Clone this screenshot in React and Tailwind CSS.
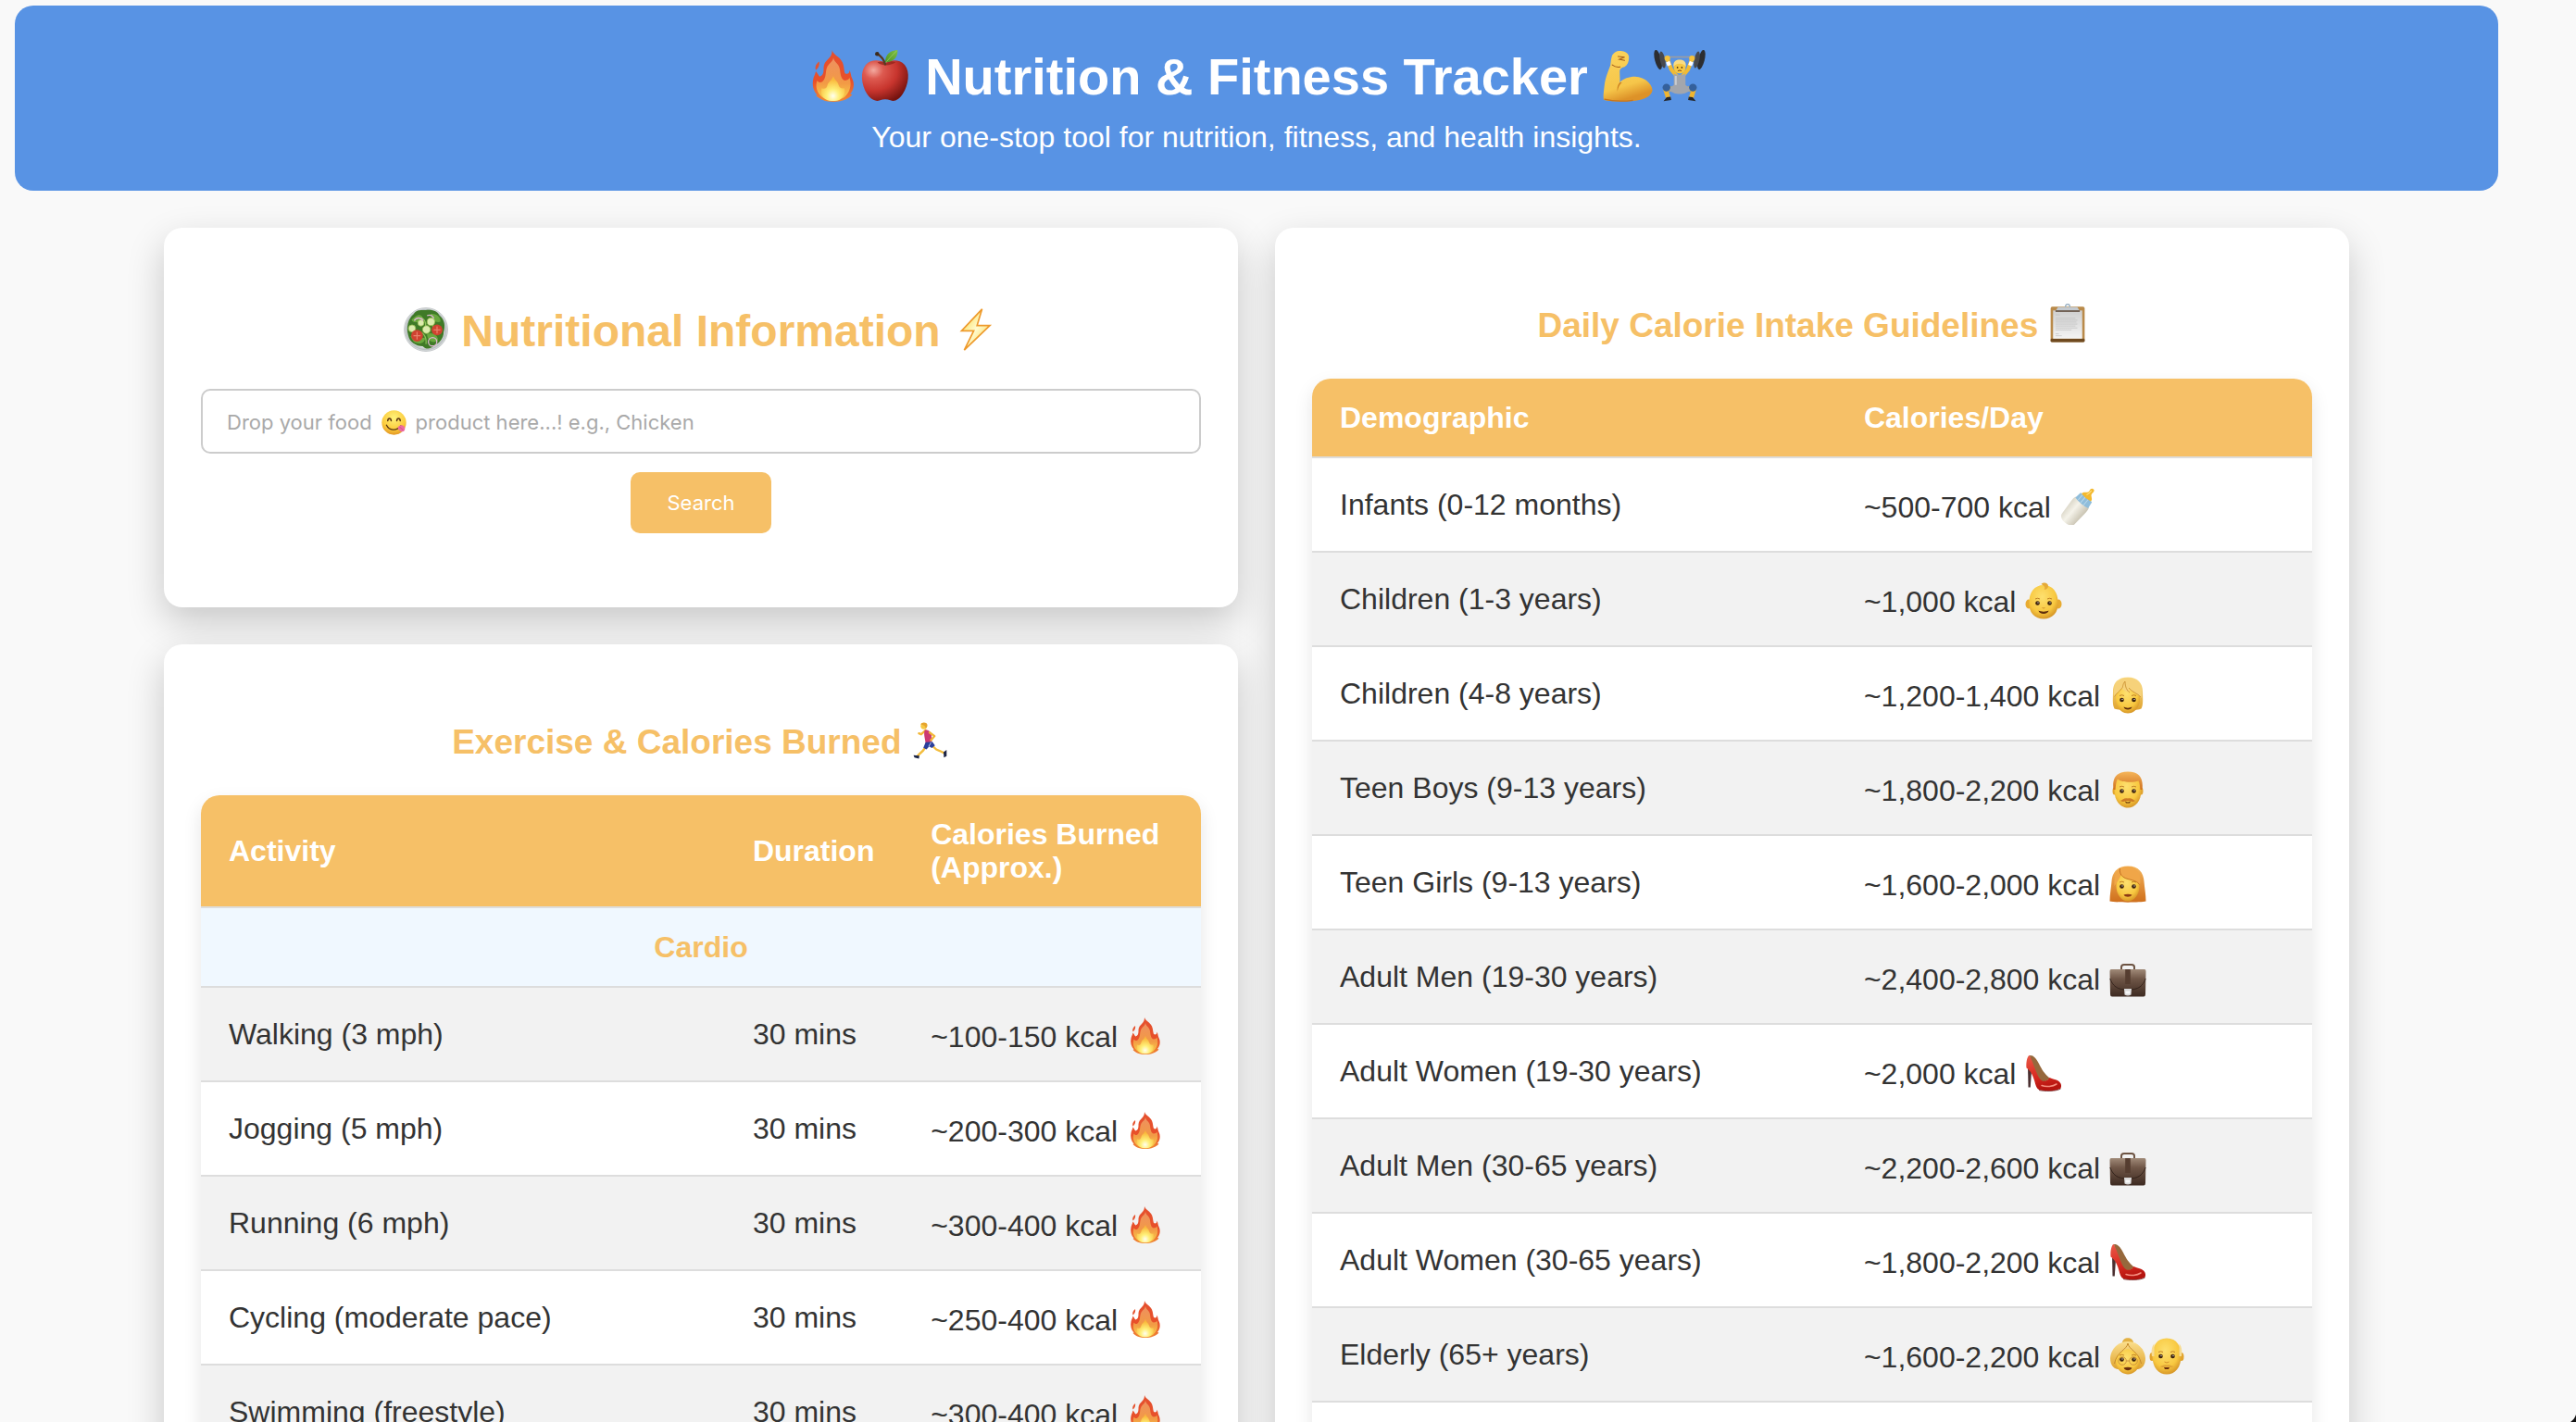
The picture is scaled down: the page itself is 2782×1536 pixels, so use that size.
import { useState } from "react";

/* ---------- emoji drawings, all on a 40 x 40 grid ---------- */

function Svg({ label, className, children }) {
  return (
    <svg viewBox="0 0 40 40" role="img" aria-label={label} className={className}>
      {children}
    </svg>
  );
}

function Fire({ className }) {
  return (
    <Svg label="fire" className={className}>
      <defs>
        <linearGradient id="fireOuter" x1="0" y1="0" x2="0" y2="1">
          <stop offset="0" stopColor="#e4502e" />
          <stop offset="0.6" stopColor="#e8502a" />
          <stop offset="1" stopColor="#f08a35" />
        </linearGradient>
        <linearGradient id="fireMid" x1="0" y1="0" x2="0" y2="1">
          <stop offset="0" stopColor="#ee9060" />
          <stop offset="0.6" stopColor="#f29a45" />
          <stop offset="1" stopColor="#fad24a" />
        </linearGradient>
        <radialGradient id="fireCore" cx="0.5" cy="0.8" r="0.65">
          <stop offset="0" stopColor="#fffef0" />
          <stop offset="0.4" stopColor="#fff07a" />
          <stop offset="1" stopColor="#f9b93c" />
        </radialGradient>
      </defs>
      <path d="M19 0C20 4 25 5 27 9.500C28.500 13 28 15.500 29 18C31 19 32.500 18 32.500 15.500C33.500 17.500 33.500 20 34.500 22C36.500 26 36 30.500 33 34L34.500 34.500C32 38 26 40 20 40C14 40 9 38 6.500 35L7.500 34.500C4.500 31.500 3.500 27 4.500 22.500C5 20 6 19 6.500 16.500C8 18 8.500 20 9.500 20.500C11.500 20 12.500 18 12.500 15C12.500 11 13.500 9.500 16 7C18 5 19 3.500 19 0Z" fill="url(#fireOuter)" />
      <path d="M9 9C9.500 11 9 13.500 6.500 15.500C5.500 13.500 6.500 11 9 9Z" fill="#e5532f" />
      <path d="M20 6C21 10 24.500 10.500 25 15C25.500 19 26 23 29 23.500C31 23.500 32 22.500 32.500 21.500C34.500 27.500 32.500 33 28.500 36.500C24.500 39.500 15 39.500 11 36C7 32.500 6 27.500 7.500 23.500C8.500 25 10 25.500 11.500 24.500C15 21.500 13.500 16 15.500 12.500C17 10 19.500 9 20 6Z" fill="url(#fireMid)" />
      <path d="M20 20C20.500 23 23.500 24 24 27C24.500 29 26 30 28.500 29.500C29.500 33 28 36 25.500 38C23 39.800 16.500 39.800 14 38C11 36 10 33 11 29.500C13.500 30.500 15 29.500 15.500 27C16 24.500 19 23.500 20 20Z" fill="url(#fireCore)" />
    </Svg>
  );
}

function Apple({ className }) {
  return (
    <Svg label="red apple" className={className}>
      <defs>
        <radialGradient id="appleSkin" cx="0.25" cy="0.24" r="0.85">
          <stop offset="0" stopColor="#f3aaa0" />
          <stop offset="0.25" stopColor="#dd5a50" />
          <stop offset="0.6" stopColor="#c8352e" />
          <stop offset="1" stopColor="#75130f" />
        </radialGradient>
        <linearGradient id="appleLeaf" x1="0" y1="1" x2="1" y2="0">
          <stop offset="0" stopColor="#4b9426" />
          <stop offset="1" stopColor="#7fc045" />
        </linearGradient>
      </defs>
      <path d="M20 10C24 7.500 31 7 35 11.500C39.500 17 38 27 33.500 34C30.500 38.800 27 40 24 38.800C21.500 37.800 18.500 37.800 16 38.800C13 40 9 38.500 6 34C1.500 27 0.500 17 5 11.500C9 7 16 7.500 20 10Z" fill="url(#appleSkin)" />
      <path d="M14 9.500C17 12.500 24 12.500 28 9.500C24 8 22 9 20.500 10.500C18.500 8.500 17 8.500 14 9.500Z" fill="#8d1f18" opacity="0.7" />
      <path d="M20 11C19 7.500 16.500 4.500 14 3" stroke="#5a3a22" strokeWidth="1.700" strokeLinecap="round" fill="none" />
      <circle cx="13.800" cy="3" r="1.600" fill="#3d2a1a" />
      <path d="M20 9.500C20 4 23 0.500 29.500 0C30 5.500 26.500 9.500 20 9.500Z" fill="url(#appleLeaf)" />
      <path d="M21 9C23.500 6 26 3.500 29 0.500" stroke="#a8d66e" strokeWidth="0.500" fill="none" />
    </Svg>
  );
}

function Biceps({ className }) {
  return (
    <Svg label="flexed biceps" className={className}>
      <defs>
        <linearGradient id="bicepsSkin" x1="0" y1="0" x2="0.3" y2="1">
          <stop offset="0" stopColor="#fbd45c" />
          <stop offset="0.75" stopColor="#f6c64a" />
          <stop offset="1" stopColor="#dd9228" />
        </linearGradient>
      </defs>
      <path d="M8 4C9.500 1.500 12 0.300 14.500 0.800C17.500 1 20.500 2.500 20.800 5C21 8.500 20 11.500 17.500 13C15.500 13.500 14.500 14 13.800 15.500C13.500 19 14.200 22 13.800 25C16.500 22 21 20.500 25.500 20.500C32.500 20.800 38.500 25.500 39 31C38 36.500 31 39 22 39.500C14 40 6 39.500 1.500 38.500C0.800 37 1.300 33 2 27C3 20 5 16.500 6.500 12C7 9 7 6.500 8 4Z" fill="url(#bicepsSkin)" />
      <path d="M13.800 25C12 27 11.500 29.500 12 32C12.500 29 13.500 27 15.500 25Z" fill="#cf8222" />
      <path d="M1.800 38C8 39.500 16 39.800 24 38.800" stroke="#c9741b" strokeWidth="0.900" fill="none" />
      <path d="M12.500 5L17.500 5.500L13.500 7.200L17.500 8M8 11.500C10 13 12 13.500 14 13" stroke="#a35b1b" strokeWidth="0.800" fill="none" strokeLinecap="round" />
    </Svg>
  );
}

function Lifter({ className }) {
  return (
    <Svg label="person lifting weights" className={className}>
      <rect x="6" y="4.800" width="28" height="1.200" fill="#9a9da3" />
      <g fill="#2c2d30">
        <ellipse cx="3.300" cy="7.500" rx="2.500" ry="7.800" transform="rotate(-14 3.300 7.500)" />
        <ellipse cx="36.700" cy="7.500" rx="2.500" ry="7.800" transform="rotate(14 36.700 7.500)" />
      </g>
      <g fill="#47494e">
        <ellipse cx="6.800" cy="7.500" rx="2" ry="6.500" transform="rotate(-12 6.800 7.500)" />
        <ellipse cx="33.200" cy="7.500" rx="2" ry="6.500" transform="rotate(12 33.200 7.500)" />
      </g>
      <path d="M10.500 7L13.500 15L18 20.500M29.500 7L26.500 15L22 20.500" stroke="#f2bb33" strokeWidth="3" fill="none" />
      <path d="M10.800 9L12 12M29.200 9L28 12" stroke="#fff" strokeWidth="3" />
      <circle cx="10.500" cy="6.500" r="2.200" fill="#f4c13c" />
      <circle cx="29.500" cy="6.500" r="2.200" fill="#f4c13c" />
      <path d="M14 30L9 30L11.500 38M26 30L31 30L28.500 38" stroke="#f0b52f" strokeWidth="3.600" fill="none" strokeLinejoin="round" />
      <path d="M15.500 18C17 19.500 23 19.500 24.500 18L24.500 27L28.500 30C27 33 23 34 20 34C17 34 13 33 11.500 30L15.500 27Z" fill="#a3a6ac" />
      <path d="M17 20L17 27" stroke="#c9cbcf" strokeWidth="1.500" />
      <circle cx="9.800" cy="29" r="3" fill="#34609c" />
      <circle cx="30.200" cy="29" r="3" fill="#34609c" />
      <circle cx="20" cy="13.500" r="4.600" fill="#f7c843" />
      <path d="M15.200 13C14.800 8.500 17.500 7.500 20 7.500C22.500 7.500 25.200 8.500 24.800 13C23.500 11 22 10.500 20 10.500C18 10.500 16.500 11 15.200 13Z" fill="#fadc82" />
      <circle cx="18.300" cy="13.500" r="0.600" fill="#4a2b11" />
      <circle cx="21.700" cy="13.500" r="0.600" fill="#4a2b11" />
      <path d="M18.500 16.300C19.500 15.500 20.500 15.500 21.500 16.300" stroke="#7b3d14" strokeWidth="0.700" fill="none" />
      <path d="M7.500 39.500L13.500 38.500L13 36L10 36.500ZM32.500 39.500L26.500 38.500L27 36L30 36.500Z" fill="#26272b" />
    </Svg>
  );
}

function Salad({ className }) {
  return (
    <Svg label="green salad" className={className}>
      <defs>
        <radialGradient id="saladBowl" cx="0.5" cy="0.5" r="0.5">
          <stop offset="0.8" stopColor="#dfe3e4" />
          <stop offset="0.92" stopColor="#b9bfc1" />
          <stop offset="1" stopColor="#eceeee" />
        </radialGradient>
      </defs>
      <circle cx="20" cy="20" r="19.600" fill="url(#saladBowl)" stroke="#a9afb1" strokeWidth="0.500" />
      <path d="M9 6C12 1 18 3 20 2.500C25 2 30 3 32 7C37 11 37.500 17 36 22C36 28 32 32 28 34C24 38 20 38 17 35C11 35 5 31 4 25C2 18 4 10 9 6Z" fill="#3f7a27" />
      <path d="M11 8C15 5 18 8 16 12C12 14 8 14 7 11ZM24 6C29 5 34 9 33 13C29 14 25 12 24 6ZM21 24C26 22 31 25 31 30C26 33 21 30 21 24ZM6 26C10 24 14 29 19 27C20 32 14 34 9 31Z" fill="#69a83e" />
      <path d="M16 9C20 12 21 16 18 20M28 12C25 16 26 20 30 23M13 22C17 22 21 26 20 33" stroke="#8bc356" strokeWidth="1" fill="none" />
      <g stroke="#9bbf56" strokeWidth="0.700" fill="#dcecae">
        <circle cx="7.500" cy="19" r="3.200" />
        <circle cx="24.500" cy="13" r="3.400" />
        <circle cx="20.500" cy="20" r="3.500" />
        <circle cx="15.500" cy="14" r="2.800" />
      </g>
      <g fill="#cf4330">
        <circle cx="12" cy="25.500" r="5.300" />
        <circle cx="30" cy="20.300" r="4.900" />
      </g>
      <path d="M12 22V29M8.800 25.500H15.200M30 17V23.500M27 20.300H33" stroke="#e9806a" strokeWidth="1" />
      <g fill="none" stroke="#dcb4cf" strokeWidth="1.100">
        <circle cx="26" cy="31" r="3.800" />
        <path d="M9.500 12C11 9 15.500 8.500 17.500 12M21 7.500C24 6 26.500 8 27 10" />
      </g>
    </Svg>
  );
}

function Bolt({ className }) {
  return (
    <Svg label="high voltage" className={className}>
      <defs>
        <linearGradient id="boltFill" x1="0" y1="0" x2="1" y2="1">
          <stop offset="0" stopColor="#fbd52f" />
          <stop offset="0.5" stopColor="#fffbd0" />
          <stop offset="1" stopColor="#fbcf2d" />
        </linearGradient>
      </defs>
      <path d="M25.500 1.500L7 21.200L18 21.200L9.500 38.500L32.500 16.300L21 16.300Z" fill="url(#boltFill)" stroke="#ee9a2c" strokeWidth="1.400" strokeLinejoin="miter" />
    </Svg>
  );
}

function Yum({ className }) {
  return (
    <Svg label="face savoring food" className={className}>
      <defs>
        <radialGradient id="yumFace" cx="0.5" cy="0.3" r="0.75">
          <stop offset="0" stopColor="#fff27a" />
          <stop offset="0.65" stopColor="#fbcb3c" />
          <stop offset="1" stopColor="#dd8a1f" />
        </radialGradient>
      </defs>
      <circle cx="20" cy="20" r="19.500" fill="url(#yumFace)" />
      <path d="M10 17C10.500 12 15 12 15.500 17M24.500 17C25 12 29.500 12 30 17" stroke="#5b3512" strokeWidth="2.200" fill="none" strokeLinecap="round" />
      <path d="M8 24C12 32 23 35 31 25" stroke="#5b3512" strokeWidth="2" fill="none" strokeLinecap="round" />
      <path d="M26 28C28 24 33 23 36 26C39 30 37 35 33 34.500C30 34 27 32 26 28Z" fill="#ee6aa0" />
      <path d="M29 27.500C31 28 33 30 34 32" stroke="#c13f7b" strokeWidth="1" fill="none" />
    </Svg>
  );
}

function Runner({ className }) {
  return (
    <Svg label="person running" className={className}>
      <g transform="translate(2 2) scale(0.92)">
        <path d="M14 9L9 13.500L6.500 12.500" stroke="#f1b636" strokeWidth="2.400" fill="none" strokeLinecap="round" />
        <path d="M16 25L11 32L5 37.500" stroke="#f3bd3d" strokeWidth="2.600" fill="none" />
        <path d="M20 25L26 30.500L35 34.500" stroke="#f3bd3d" strokeWidth="2.400" fill="none" />
        <path d="M13 9C16 8 19.500 10 20.500 13L21 22L14 23.500C13.500 18 11.500 14 13 9Z" fill="#cc3a72" />
        <path d="M14 22.500L21.500 22L24.500 26L21 29L18 27L15 30.500L11.500 28.500Z" fill="#2b3f9b" />
        <path d="M17.500 27L20 23" stroke="#dbe3f7" strokeWidth="0.900" />
        <path d="M18.500 11.500L24 15.500L20 20" stroke="#f1b636" strokeWidth="2.400" fill="none" strokeLinecap="round" strokeLinejoin="round" />
        <circle cx="12" cy="4.300" r="3.500" fill="#f7c843" />
        <path d="M8.500 2.500C9.500 0 15 -0.500 16 3C16 5.500 15 6.500 14 6.500C14 4.500 12 3 8.500 2.500Z" fill="#e6a52f" />
        <path d="M0.500 37L7 37.500L6.500 40.800L1.500 39.500Z" fill="#1d2545" />
        <path d="M34 33.500L37.500 31L37.500 38L34.500 39.500Z" fill="#1d2545" />
      </g>
    </Svg>
  );
}

function Clipboard({ className }) {
  return (
    <Svg label="clipboard" className={className}>
      <defs>
        <linearGradient id="clipPaper" x1="0" y1="0" x2="0" y2="1">
          <stop offset="0" stopColor="#cfcfcf" />
          <stop offset="1" stopColor="#f4f4f4" />
        </linearGradient>
      </defs>
      <rect x="2.500" y="3" width="35" height="36.500" rx="1.800" fill="#b98a4a" />
      <rect x="2.500" y="36" width="35" height="3.500" rx="1.200" fill="#6f4a20" />
      <rect x="5" y="7" width="30" height="29" fill="url(#clipPaper)" />
      <path d="M7.500 11.500H12M7.500 15H28M7.500 17H30M7.500 19H29M7.500 21H30M7.500 23H28M7.500 25H30M7.500 27H24M7.500 31H11M7.500 33H14" stroke="#bcbcbc" strokeWidth="0.600" />
      <circle cx="20" cy="2.800" r="2.200" fill="none" stroke="#8fa9bd" strokeWidth="1.200" />
      <path d="M10 3.500H30L32.500 7.500H7.500Z" fill="#c3c9cf" />
      <path d="M7.500 6.800H32.500V8.500H7.500Z" fill="#6b5a4d" />
    </Svg>
  );
}

function Bottle({ className }) {
  return (
    <Svg label="baby bottle" className={className}>
      <defs>
        <linearGradient id="bottleMilk" x1="0" y1="0" x2="1" y2="0">
          <stop offset="0" stopColor="#dcd8ca" />
          <stop offset="0.4" stopColor="#f5f3ea" />
          <stop offset="1" stopColor="#c9c3b2" />
        </linearGradient>
      </defs>
      <g transform="rotate(40 20 20)">
        <path d="M11 14C9.500 16 10 19 10 21L11 37C11 41 15 43 20 43C25 43 29 41 29 37L30 21C30 19 30.500 16 29 14Z" fill="url(#bottleMilk)" />
        <path d="M12 7.500Q20 5.500 28 7.500L29 15Q20 17 11 15Z" fill="#8fbddb" />
        <path d="M15 8V15M19 8V15.500M23 8V15.500" stroke="#b9d8ea" strokeWidth="1" />
        <path d="M13.500 7.500C13.500 3 18 4 18 0C17.500 -2 17.500 -4.500 20 -4.500C22.500 -4.500 22.500 -2 22 0C22 4 26.500 3 26.500 7.500Q20 9 13.500 7.500Z" fill="#f3b92f" />
        <path d="M18.500 5C19.500 3 19.500 1 19.500 -2" stroke="#fce08a" strokeWidth="1.200" fill="none" />
      </g>
    </Svg>
  );
}

function SkinGradient() {
  return (
    <defs>
      <radialGradient id="skin" cx="0.45" cy="0.35" r="0.7">
        <stop offset="0" stopColor="#fde06f" />
        <stop offset="0.65" stopColor="#f8c840" />
        <stop offset="1" stopColor="#d08c22" />
      </radialGradient>
      <linearGradient id="blond" x1="0" y1="0" x2="0" y2="1">
        <stop offset="0" stopColor="#fbdf8d" />
        <stop offset="1" stopColor="#dfa32f" />
      </linearGradient>
      <linearGradient id="ginger" x1="0" y1="0" x2="0" y2="1">
        <stop offset="0" stopColor="#f5b55a" />
        <stop offset="1" stopColor="#cf6f1c" />
      </linearGradient>
    </defs>
  );
}

function Eyes({ y }) {
  return (
    <g>
      <circle cx="13.500" cy={y} r="2.300" fill="#3c220d" />
      <circle cx="26.500" cy={y} r="2.300" fill="#3c220d" />
      <circle cx="14" cy={y - 0.6} r="0.600" fill="#fff" />
      <circle cx="27" cy={y - 0.6} r="0.600" fill="#fff" />
      <path d={`M11 ${y - 4.5}Q13.500 ${y - 6} 16 ${y - 4.5}M24 ${y - 4.5}Q26.500 ${y - 6} 29 ${y - 4.5}`} stroke="#b9761f" strokeWidth="0.900" fill="none" />
    </g>
  );
}

function Baby({ className }) {
  return (
    <Svg label="baby" className={className}>
      <SkinGradient />
      <ellipse cx="4" cy="23.500" rx="3.500" ry="5" fill="#e8ab31" />
      <ellipse cx="36" cy="23.500" rx="3.500" ry="5" fill="#e8ab31" />
      <path d="M20 3C30 3 35.500 11 35.500 21C36.500 33 29 39.500 20 39.500C11 39.500 3.500 33 4.500 21C4.500 11 10 3 20 3Z" fill="url(#skin)" />
      <path d="M17.500 2C20 -0.500 25 0.500 25 4C25 7 22 8.500 20.500 7.500C22 6.500 21.500 4 17.500 2Z" fill="#e5aa37" />
      <Eyes y={22.500} />
      <path d="M14.500 30.500C17 32 23 32 25.500 30.500C25 35 15 35 14.500 30.500Z" fill="#5d2c0c" />
      <path d="M18.500 27.500Q20 28.500 21.500 27.500" stroke="#c98122" strokeWidth="0.800" fill="none" />
    </Svg>
  );
}

function Child({ className }) {
  return (
    <Svg label="child" className={className}>
      <SkinGradient />
      <path d="M20 0.500C31 0.500 36 7 36 16C36 22 37 30 34.500 34.500C31 36.500 9 36.500 5.500 34.500C3 30 4 22 4 16C4 7 9 0.500 20 0.500Z" fill="url(#blond)" />
      <path d="M20 7C29 7 33 14 33 24C33 33 27 39.500 20 39.500C13 39.500 7 33 7 24C7 14 11 7 20 7Z" fill="url(#skin)" />
      <path d="M5 22C7 18 10 17 13.500 12C15 15 19 16 22 17C22 15 21 13.500 21 12C24 17 31 18 34.500 23C37 12 33 1 20 1C8 1 3 11 5 22Z" fill="#f6d27a" />
      <path d="M17 5C14 8 15 12 13.500 12.500C11 16 7.500 18 5.500 21.500M17 5C17 11 19 15 22 17M21 12C24 16.500 31 18 34 22" stroke="#c68a2c" strokeWidth="0.800" fill="none" />
      <Eyes y={25} />
      <path d="M15.500 32.500C18 34 22 34 24.500 32.500C24 36.500 16 36.500 15.500 32.500Z" fill="#5d2c0c" />
    </Svg>
  );
}

function Man({ className }) {
  return (
    <Svg label="man" className={className}>
      <SkinGradient />
      <ellipse cx="5.500" cy="21.500" rx="2" ry="4" fill="#e2a32e" />
      <ellipse cx="34.500" cy="21.500" rx="2" ry="4" fill="#e2a32e" />
      <path d="M20 4C30 4 34.500 10 34.500 21C34.500 32 28 39.500 20 39.500C12 39.500 5.500 32 5.500 21C5.500 10 10 4 20 4Z" fill="url(#skin)" />
      <path d="M4.500 20C3 8 7 0.500 20 0.500C33 0.500 37 8 35.500 20L33.500 20C33 16 33 13 31.500 10.500C26 12.500 13 12.500 9 8.500C7 12 7 16 6.500 20Z" fill="url(#ginger)" />
      <Eyes y={21.500} />
      <path d="M12 32C14.500 31 16 28.500 20 29.500C24 28.500 25.500 31 28 32C25 34 22.500 32 20 32C17.500 32 15 34 12 32Z" fill="#cc7a25" />
      <path d="M17 32.500C19 33.800 21 33.800 23 32.500L22 34.500H18Z" fill="#5d2c0c" />
    </Svg>
  );
}

function Woman({ className }) {
  return (
    <Svg label="woman" className={className}>
      <SkinGradient />
      <path d="M20 0.500C32 0.500 37 8 37.500 17C38 24 39.500 31 39.500 38.500C34 40 6 40 0.500 38.500C0.500 31 2 24 2.500 17C3 8 8 0.500 20 0.500Z" fill="url(#ginger)" />
      <path d="M20 8C28 8 32.500 14 32.500 22C32.500 32 26.500 38.500 20 38.500C13.500 38.500 7.500 32 7.500 22C7.500 14 12 8 20 8Z" fill="url(#skin)" />
      <path d="M11.500 3C10.500 9 14 13 20 14.500C26 16 31 17.500 33 21C35 9 30 1 20 1C9 1 4.500 9 5.500 22C8 18 11 15 12.500 10Z" fill="#f0a648" />
      <path d="M11.500 3C10.500 9 14 13 20 14.500C26 16 31 17.500 32.500 20.500" stroke="#b96518" strokeWidth="0.800" fill="none" />
      <Eyes y={22.500} />
      <path d="M15.500 31.500C18 30.500 22 30.500 24.500 31.500C23 34.500 17 34.500 15.500 31.500Z" fill="#8c3a14" />
    </Svg>
  );
}

function Briefcase({ className }) {
  return (
    <Svg label="briefcase" className={className}>
      <defs>
        <linearGradient id="caseBody" x1="0" y1="0" x2="0" y2="1">
          <stop offset="0" stopColor="#a08a78" />
          <stop offset="0.35" stopColor="#6f5647" />
          <stop offset="1" stopColor="#3d2a21" />
        </linearGradient>
      </defs>
      <path d="M13 10V7.500Q13 5 16 5H24Q27 5 27 7.500V10" stroke="#6d5443" strokeWidth="2" fill="none" />
      <path d="M2 10H38Q39.500 10 39.500 12L39 37Q39 39.500 37 39.500H3Q1 39.500 1 37L0.500 12Q0.500 10 2 10Z" fill="url(#caseBody)" />
      <path d="M0.800 20C5 32 14 32 20 32C26 32 35 32 39.200 20" stroke="#2f1f18" strokeWidth="0.900" fill="none" />
      <rect x="17.200" y="10" width="5.600" height="16" fill="#553d30" />
      <path d="M16 31H24L23.500 37.500Q20 39.500 16.500 37.500Z" fill="#d9d9d9" />
      <path d="M17.500 33.500H22.500V36.500H17.500Z" fill="#f7f7f7" />
    </Svg>
  );
}

function Heel({ className }) {
  return (
    <Svg label="high-heeled shoe" className={className}>
      <defs>
        <linearGradient id="heelRed" x1="0" y1="0" x2="0.2" y2="1">
          <stop offset="0" stopColor="#ea5a48" />
          <stop offset="0.6" stopColor="#d92c22" />
          <stop offset="1" stopColor="#b5140f" />
        </linearGradient>
      </defs>
      <path d="M3 13L7 17L5.800 35.500H3.500Z" fill="#4a2f30" />
      <path d="M5 1C9 0.500 12 4 15 10C18 16 21 21 27 26L17 32C12 22 6 14 5 1Z" fill="#96683c" />
      <path d="M4.500 0.800C2 3 1 9 1.500 14.500C5 17 8 21 10 28C11.500 33 12 37 16 38.500C23 40 34 39.500 38.500 36.500C40.500 32 37 28 32 27C29.500 26.500 28 25.500 26.500 25C25 27.500 22 29.500 18.500 28.500C15 26.500 13 21 11 16C9 11 7 5 4.500 0.800Z" fill="url(#heelRed)" />
      <path d="M18 33.500C23 35.500 30 34.500 34 32" stroke="#f58f80" strokeWidth="1.500" fill="none" strokeLinecap="round" />
      <path d="M15 38.500C20 40 34 40 38.500 37" stroke="#5b1414" strokeWidth="0.700" fill="none" />
    </Svg>
  );
}

function OldWoman({ className }) {
  return (
    <Svg label="old woman" className={className}>
      <SkinGradient />
      <path d="M14 6C14 2 17 0.300 20 0.300C23 0.300 26 2 26 6Z" fill="#e3b143" />
      <path d="M20 4C31 4 38.500 13 39 22C39 29 36 33 31 34H9C4 33 1 29 1 22C1.500 13 9 4 20 4Z" fill="url(#blond)" />
      <path d="M20 12C28 14 33 20 33 26C33 34 26 39.500 20 39.500C14 39.500 7 34 7 26C7 20 12 14 20 12Z" fill="url(#skin)" />
      <path d="M20 6C19 13 8 15 5.500 28M20 6C21 13 32 15 34.500 28" stroke="#c68a29" strokeWidth="1" fill="none" />
      <Eyes y={23.500} />
      <g fill="none" stroke="#c9903b" strokeWidth="0.900">
        <circle cx="14" cy="25" r="4.300" />
        <circle cx="26" cy="25" r="4.300" />
        <path d="M18.300 25H21.700" />
      </g>
      <path d="M15.500 32.500C18 31.500 22 31.500 24.500 32.500C23 36 17 36 15.500 32.500Z" fill="#6a2f0e" />
    </Svg>
  );
}

function OldMan({ className }) {
  return (
    <Svg label="old man" className={className}>
      <SkinGradient />
      <ellipse cx="4" cy="20.500" rx="2.500" ry="4.500" fill="#e2a32e" />
      <ellipse cx="36" cy="20.500" rx="2.500" ry="4.500" fill="#e2a32e" />
      <path d="M20 0.500C31 0.500 35.500 9 35.500 20C35.500 32 29 39.500 20 39.500C11 39.500 4.500 32 4.500 20C4.500 9 9 0.500 20 0.500Z" fill="url(#skin)" />
      <path d="M4 20C3 14 4 9 6.500 6.500C6.500 10 6.500 15 6.500 20ZM36 20C37 14 36 9 33.500 6.500C33.500 10 33.500 15 33.500 20Z" fill="#f7dc93" />
      <Eyes y={20} />
      <path d="M12.500 31C15 30.500 17 28.500 20 29.500C23 28.500 25 30.500 27.500 31C25 33 22 31.500 20 31.500C18 31.500 15 33 12.500 31Z" fill="#e0a437" />
      <path d="M17 32H23L22 34H18Z" fill="#6a2f0e" />
      <path d="M17.500 26Q20 28 22.500 26" stroke="#c98122" strokeWidth="0.800" fill="none" />
    </Svg>
  );
}

/* ---------- data ---------- */

const exercises = [
  ["Walking (3 mph)", "30 mins", "~100-150 kcal"],
  ["Jogging (5 mph)", "30 mins", "~200-300 kcal"],
  ["Running (6 mph)", "30 mins", "~300-400 kcal"],
  ["Cycling (moderate pace)", "30 mins", "~250-400 kcal"],
  ["Swimming (freestyle)", "30 mins", "~300-400 kcal"],
];

const guidelines = [
  ["Infants (0-12 months)", "~500-700 kcal", [Bottle]],
  ["Children (1-3 years)", "~1,000 kcal", [Baby]],
  ["Children (4-8 years)", "~1,200-1,400 kcal", [Child]],
  ["Teen Boys (9-13 years)", "~1,800-2,200 kcal", [Man]],
  ["Teen Girls (9-13 years)", "~1,600-2,000 kcal", [Woman]],
  ["Adult Men (19-30 years)", "~2,400-2,800 kcal", [Briefcase]],
  ["Adult Women (19-30 years)", "~2,000 kcal", [Heel]],
  ["Adult Men (30-65 years)", "~2,200-2,600 kcal", [Briefcase]],
  ["Adult Women (30-65 years)", "~1,800-2,200 kcal", [Heel]],
  ["Elderly (65+ years)", "~1,600-2,200 kcal", [OldWoman, OldMan]],
];

/* ---------- page parts ---------- */

const cell = "border-b-2 border-[#ddd] px-[30px] py-6 text-left";
const rowIcon = "mt-2 mb-1 inline-block h-10 w-[42px] align-[-12px]";
const headingIcon = "inline-block size-[42px] align-[-6px]";
const titleIcon = "inline-block size-14 align-[-8px]";
const sectionIcon = "inline-block h-12 w-[50px] align-[-6px]";

function Card({ children }) {
  return (
    <section className="rounded-[20px] bg-white p-10 shadow-[0_16px_40px_rgba(0,0,0,0.2)]">
      {children}
    </section>
  );
}

function CardHeading({ children }) {
  return (
    <h2 className="mt-10 mb-[31px] text-center text-[37px] leading-[52px] font-bold text-[#f6c067]">
      {children}
    </h2>
  );
}

function DataTable({ children }) {
  return (
    <div className="overflow-hidden rounded-[20px] shadow-[0_8px_20px_rgba(0,0,0,0.1)]">
      <table className="w-full table-fixed border-separate border-spacing-0 text-[32px] leading-9 text-[#333]">
        {children}
      </table>
    </div>
  );
}

function FoodSearch() {
  const [food, setFood] = useState("");
  return (
    <form className="mb-10 flex flex-col items-center gap-5 font-[Inter,sans-serif]" onSubmit={(e) => e.preventDefault()}>
      <div className="relative w-full">
        <input
          type="text"
          aria-label="Food product"
          value={food}
          onChange={(e) => setFood(e.target.value)}
          className="block h-[70px] w-full rounded-[10px] border-2 border-[#ccc] bg-white px-[26px] text-[22px] text-[#333]"
        />
        {food === "" && (
          <span className="pointer-events-none absolute inset-0 flex items-center gap-2.5 px-7 pt-0.5 text-[22px] text-[#a9a9a9]">
            Drop your food
            <Yum className="size-[27px]" />
            product here...! e.g., Chicken
          </span>
        )}
      </div>
      <button type="submit" className="h-[66px] rounded-[10px] bg-[#f6c067] px-[39px] text-[22px] text-white">
        Search
      </button>
    </form>
  );
}

export default function App() {
  return (
    <div className="h-screen overflow-hidden bg-[#f9f9f9] pt-1.5 pr-[84px] pl-4 font-['Liberation_Sans',Arial,sans-serif]">
      <header className="rounded-[20px] bg-[#5893e4] py-10 text-center text-white">
        <h1 className="mb-[10px] text-[56px] leading-[74px] font-bold">
          <Fire className={titleIcon} />
          <Apple className={titleIcon} /> Nutrition &amp; Fitness Tracker <Biceps className={titleIcon} />
          <Lifter className={titleIcon} />
        </h1>
        <p className="text-[32px] leading-9">Your one-stop tool for nutrition, fitness, and health insights.</p>
      </header>

      <main className="mx-auto mt-10 grid max-w-[2360px] grid-cols-2 items-start gap-10">
        <div className="flex flex-col gap-10">
          <Card>
            <h2 className="mt-10 mb-[30px] text-center text-[48px] leading-[64px] font-bold text-[#f6c067]">
              <Salad className={sectionIcon} /> Nutritional Information <Bolt className={sectionIcon} />
            </h2>
            <FoodSearch />
          </Card>

          <Card>
            <CardHeading>
              Exercise &amp; Calories Burned <Runner className={headingIcon} />
            </CardHeading>
            <DataTable>
              <thead className="bg-[#f6c067] text-white">
                <tr>
                  <th scope="col" className={`${cell} w-[52.4%]`}>Activity</th>
                  <th scope="col" className={`${cell} w-[17.8%]`}>Duration</th>
                  <th scope="col" className={cell}>Calories Burned (Approx.)</th>
                </tr>
              </thead>
              <tbody>
                <tr className="bg-[#f0f8ff]">
                  <th scope="rowgroup" colSpan={3} className="border-b-2 border-[#ddd] py-6 text-center text-[#f6c067]">
                    Cardio
                  </th>
                </tr>
                {exercises.map(([activity, duration, calories]) => (
                  <tr key={activity} className="odd:bg-white even:bg-[#f2f2f2]">
                    <td className={cell}>{activity}</td>
                    <td className={cell}>{duration}</td>
                    <td className={`${cell} whitespace-nowrap`}>
                      {calories} <Fire className={rowIcon} />
                    </td>
                  </tr>
                ))}
              </tbody>
            </DataTable>
          </Card>
        </div>

        <Card>
          <CardHeading>
            Daily Calorie Intake Guidelines <Clipboard className={headingIcon} />
          </CardHeading>
          <DataTable>
            <thead className="bg-[#f6c067] text-white">
              <tr>
                <th scope="col" className={`${cell} w-[52.4%]`}>Demographic</th>
                <th scope="col" className={cell}>Calories/Day</th>
              </tr>
            </thead>
            <tbody>
              {guidelines.map(([group, calories, icons]) => (
                <tr key={group} className="odd:bg-white even:bg-[#f2f2f2]">
                  <td className={cell}>{group}</td>
                  <td className={cell}>
                    {calories}{" "}
                    {icons.map((Icon, i) => (
                      <Icon key={i} className={rowIcon} />
                    ))}
                  </td>
                </tr>
              ))}
              <tr className="bg-white">
                <td colSpan={2} className="h-24" />
              </tr>
            </tbody>
          </DataTable>
        </Card>
      </main>

      <svg viewBox="0 0 6 8" aria-hidden="true" className="fixed right-0 bottom-0 h-2 w-1.5">
        <path d="M6 0V8H0C3 6 5 3 6 0Z" fill="#111" />
      </svg>
    </div>
  );
}
